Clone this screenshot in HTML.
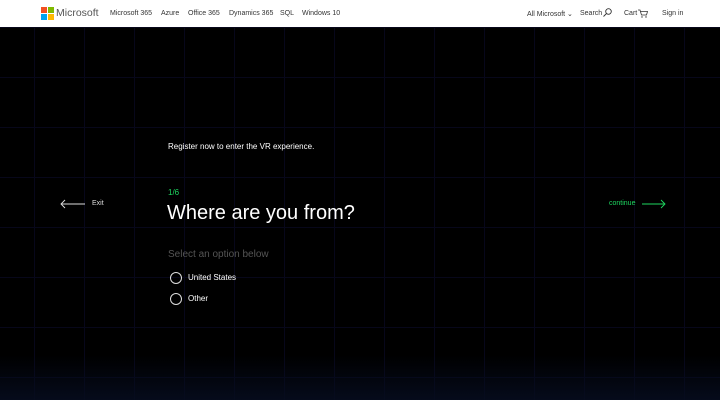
<!DOCTYPE html>
<html><head><meta charset="utf-8"><style>
*{margin:0;padding:0;box-sizing:border-box}
body{width:720px;height:400px;overflow:hidden;font-family:"Liberation Sans",sans-serif;background:#000;position:relative}
.hdr{position:absolute;left:0;top:0;width:720px;height:27px;background:#fff;font-size:7px;color:#333}
.hdr span{position:absolute;top:10px;white-space:nowrap}
.main{position:absolute;left:0;top:27px;width:720px;height:373px;
background:
linear-gradient(to bottom,rgba(0,0,0,0) 88%,rgba(6,12,30,0.9) 100%),
repeating-linear-gradient(to right,transparent 0,transparent 34px,#07071a 34px,#07071a 35px,transparent 35px,transparent 50px),
repeating-linear-gradient(to bottom,#07071a 0,#07071a 1px,transparent 1px,transparent 50px),#000;}
.t{position:absolute;color:#fff;white-space:nowrap}
.circ{position:absolute;width:12px;height:12px;border:1px solid #ddd;border-radius:50%}
</style></head><body>
<div class="hdr">
<svg style="position:absolute;left:41px;top:7px" width="13" height="13"><rect x="0" y="0" width="6" height="6" fill="#f25022"/><rect x="7" y="0" width="6" height="6" fill="#7fba00"/><rect x="0" y="7" width="6" height="6" fill="#00a4ef"/><rect x="7" y="7" width="6" height="6" fill="#ffb900"/></svg>
<span style="left:56px;top:7px;font-size:10.5px;color:#555">Microsoft</span>
<span style="left:110px">Microsoft 365</span>
<span style="left:161px">Azure</span>
<span style="left:188px">Office 365</span>
<span style="left:229px">Dynamics 365</span>
<span style="left:280px">SQL</span>
<span style="left:302px">Windows 10</span>
<span style="left:527px">All Microsoft ⌄</span>
<span style="left:580px">Search</span>
<svg style="position:absolute;left:603px;top:8px" width="9" height="9"><circle cx="5.5" cy="3.5" r="2.8" fill="none" stroke="#333" stroke-width="0.9"/><line x1="3.5" y1="5.5" x2="0.5" y2="8.5" stroke="#333" stroke-width="0.9"/></svg>
<span style="left:624px">Cart</span>
<svg style="position:absolute;left:638px;top:9px" width="10" height="9"><path d="M0 1H2L3.5 6H8.5L9.5 2.5H2.5" fill="none" stroke="#333" stroke-width="0.8"/><circle cx="4" cy="8" r="0.7" fill="#333"/><circle cx="8" cy="8" r="0.7" fill="#333"/></svg>
<span style="left:662px">Sign in</span>
</div>
<div class="main"></div>
<div class="t" style="left:168px;top:142px;font-size:8px">Register now to enter the VR experience.</div>
<div class="t" style="left:168px;top:188px;font-size:8px;color:#1ed760">1/6</div>
<div class="t" style="left:167px;top:202px;font-size:20px">Where are you from?</div>
<div class="t" style="left:168px;top:249px;font-size:10px;color:#555">Select an option below</div>
<div class="circ" style="left:170px;top:272px"></div>
<div class="t" style="left:188px;top:273px;font-size:8px">United States</div>
<div class="circ" style="left:170px;top:293px"></div>
<div class="t" style="left:188px;top:294px;font-size:8px">Other</div>
<svg style="position:absolute;left:60px;top:199px" width="26" height="10"><path d="M25 5H1M5 1L1 5L5 9" fill="none" stroke="#ddd" stroke-width="0.9"/></svg>
<div class="t" style="left:92px;top:200px;font-size:7px;color:#ddd">Exit</div>
<div class="t" style="left:609px;top:200px;font-size:7px;color:#1ed760">continue</div>
<svg style="position:absolute;left:641px;top:199px" width="26" height="10"><path d="M1 5H24M20 1L24 5L20 9" fill="none" stroke="#1ed760" stroke-width="0.9"/></svg>
</body></html>
